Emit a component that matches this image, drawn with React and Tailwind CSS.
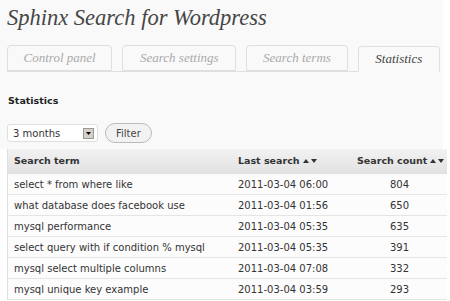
import React from "react";

const rows = [
  ["select * from where like", "2011-03-04 06:00", "804"],
  ["what database does facebook use", "2011-03-04 01:56", "650"],
  ["mysql performance", "2011-03-04 05:35", "635"],
  ["select query with if condition % mysql", "2011-03-04 05:35", "391"],
  ["mysql select multiple columns", "2011-03-04 07:08", "332"],
  ["mysql unique key example", "2011-03-04 03:59", "293"],
];

const serif = { fontFamily: '"Liberation Serif", Georgia, serif' };

function Arrows() {
  return (
    <span className="inline-flex items-center gap-[2px] ml-[3px]">
      <svg width="6" height="4" viewBox="0 0 6 4"><path d="M0 4 L3 0 L6 4 Z" fill="#333" /></svg>
      <svg width="6" height="4" viewBox="0 0 6 4"><path d="M0 0 L3 4 L6 0 Z" fill="#333" /></svg>
    </span>
  );
}

function Tab({ label, active, width }) {
  return (
    <div
      className={`h-[26px] flex items-center justify-center rounded-t-[4px] border border-[#dfdfdf] italic text-[13px] ${
        active ? "bg-[#f9f9f9] border-b-[#f9f9f9] text-[#464646] -mb-px" : "bg-[#f9f9f9] text-[#aaaaaa]"
      }`}
      style={{ width, ...serif }}
    >
      {label}
    </div>
  );
}

export default function App() {
  return (
    <div className="w-[450px] h-[301px] bg-white overflow-hidden" style={{ fontFamily: '"DejaVu Sans", Verdana, sans-serif' }}>
      <div className="w-[443px] bg-[#f9f9f9] pl-[7px]">
        <div className="pt-[3px] h-[46px] text-[22.5px] italic text-[#464646] leading-[30px]" style={serif}>
          Sphinx Search for Wordpress
        </div>
        <div className="flex gap-[10px] items-end border-b border-[#dfdfdf] h-[26px] mr-[3px]">
          <Tab label="Control panel" width={106} />
          <Tab label="Search settings" width={115} />
          <Tab label="Search terms" width={102} />
          <Tab label="Statistics" width={83} active />
        </div>
        <div className="pt-[23px] text-[9.5px] font-bold text-[#222] leading-[12px] pl-px">Statistics</div>
        <div className="flex items-center gap-[7px] pt-[16px] pb-[6px]">
          <div className="w-[91px] h-[18px] bg-white border border-[#dfdfdf] rounded-[3px] flex items-center justify-between pl-[5px] pr-[3px] text-[10px] text-[#333]">
            <span>3 months</span>
            <span className="w-[11px] h-[11px] bg-[#d4d0c8] border border-[#999] flex items-center justify-center">
              <svg width="5" height="3" viewBox="0 0 5 3"><path d="M0 0 L2.5 3 L5 0 Z" fill="#000" /></svg>
            </span>
          </div>
          <div className="h-[20px] px-[10px] rounded-full border border-[#bbb] bg-[#f2f2f2] text-[10px] text-[#464646] flex items-center">
            Filter
          </div>
        </div>
      </div>
      <div className="ml-[7px] w-[440px] border-l border-[#dfdfdf] text-[10px] text-[#333]">
        <div className="flex h-[25px] items-center bg-gradient-to-b from-[#f2f2f2] to-[#e2e2e2] font-bold text-[9.5px] text-[#333] border-b border-[#dfdfdf] whitespace-nowrap">
          <div className="w-[225px] pl-[6px]">Search term</div>
          <div className="w-[119px] pl-[5px] flex items-center">Last search<Arrows /></div>
          <div className="flex-1 pl-[5px] flex items-center">Search count<Arrows /></div>
        </div>
        {rows.map((r) => (
          <div key={r[0]} className="flex h-[21px] items-center bg-[#fcfcfc] border-b border-[#e5e5e5] whitespace-nowrap">
            <div className="w-[225px] pl-[6px]">{r[0]}</div>
            <div className="w-[119px] pl-[5px]">{r[1]}</div>
            <div className="flex-1 text-center">{r[2]}</div>
          </div>
        ))}
      </div>
    </div>
  );
}
